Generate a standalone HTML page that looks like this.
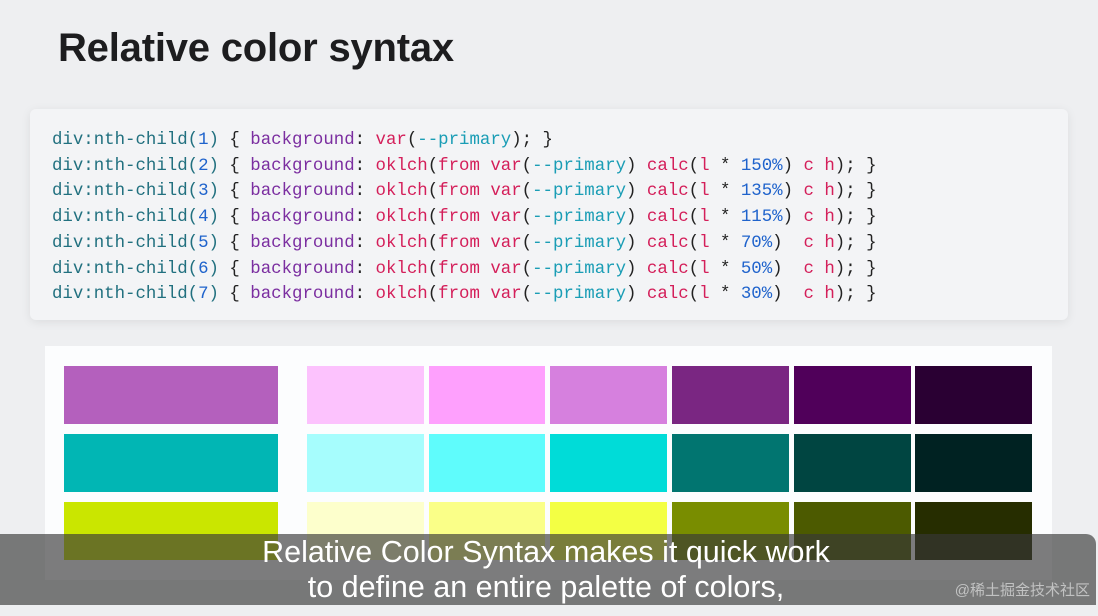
<!DOCTYPE html>
<html><head><meta charset="utf-8"><style>
*{margin:0;padding:0;box-sizing:border-box}
body{width:1098px;height:616px;overflow:hidden;background:#eeeff1;position:relative;font-family:"Liberation Sans",sans-serif}
h1{position:absolute;left:58px;top:24px;font-size:40px;font-weight:bold;color:#1d1d1f;letter-spacing:-0.2px;line-height:48px}
.code{position:absolute;left:30px;top:109px;width:1038px;height:211px;background:#f3f4f6;border-radius:6px;box-shadow:0 2px 10px rgba(0,0,0,0.08)}
pre{position:absolute;left:52px;top:128px;font-family:"Liberation Mono",monospace;font-size:17.4px;line-height:25.7px;color:#222}
.s{color:#21707f}.n{color:#1f63cc}.p{color:#7b2ea0}.f{color:#d41f5a}.v{color:#1a9db5}
.panel{position:absolute;left:45px;top:346px;width:1007px;height:234px;background:#fcfdfe}
.sw{position:absolute;height:58px}
.ov{position:absolute;left:0;top:534px;width:1096px;height:71px;background:rgba(55,55,55,0.65);border-top-right-radius:10px;color:#fff;text-align:center;font-size:30.5px;line-height:35px;padding-top:1px;padding-right:4px}
.wm{position:absolute;right:6px;bottom:4px;font-size:15px;color:rgba(255,255,255,0.55);font-family:"Liberation Sans","Noto Sans CJK SC",sans-serif;line-height:20px}
</style></head><body>
<h1>Relative color syntax</h1>
<div class="code"></div>
<pre><span class="s">div:nth-child(<span class="n">1</span>)</span> { <span class="p">background</span>: <span class="f">var</span>(<span class="v">--primary</span>); }
<span class="s">div:nth-child(<span class="n">2</span>)</span> { <span class="p">background</span>: <span class="f">oklch</span>(<span class="f">from</span> <span class="f">var</span>(<span class="v">--primary</span>) <span class="f">calc</span>(<span class="f">l</span> * <span class="n">150%</span>) <span class="f">c</span> <span class="f">h</span>); }
<span class="s">div:nth-child(<span class="n">3</span>)</span> { <span class="p">background</span>: <span class="f">oklch</span>(<span class="f">from</span> <span class="f">var</span>(<span class="v">--primary</span>) <span class="f">calc</span>(<span class="f">l</span> * <span class="n">135%</span>) <span class="f">c</span> <span class="f">h</span>); }
<span class="s">div:nth-child(<span class="n">4</span>)</span> { <span class="p">background</span>: <span class="f">oklch</span>(<span class="f">from</span> <span class="f">var</span>(<span class="v">--primary</span>) <span class="f">calc</span>(<span class="f">l</span> * <span class="n">115%</span>) <span class="f">c</span> <span class="f">h</span>); }
<span class="s">div:nth-child(<span class="n">5</span>)</span> { <span class="p">background</span>: <span class="f">oklch</span>(<span class="f">from</span> <span class="f">var</span>(<span class="v">--primary</span>) <span class="f">calc</span>(<span class="f">l</span> * <span class="n">70%</span>)  <span class="f">c</span> <span class="f">h</span>); }
<span class="s">div:nth-child(<span class="n">6</span>)</span> { <span class="p">background</span>: <span class="f">oklch</span>(<span class="f">from</span> <span class="f">var</span>(<span class="v">--primary</span>) <span class="f">calc</span>(<span class="f">l</span> * <span class="n">50%</span>)  <span class="f">c</span> <span class="f">h</span>); }
<span class="s">div:nth-child(<span class="n">7</span>)</span> { <span class="p">background</span>: <span class="f">oklch</span>(<span class="f">from</span> <span class="f">var</span>(<span class="v">--primary</span>) <span class="f">calc</span>(<span class="f">l</span> * <span class="n">30%</span>)  <span class="f">c</span> <span class="f">h</span>); }</pre>
<div class="panel"></div>
<div class="sw" style="left:64px;top:366px;width:214px;background:#b460bd"></div>
<div class="sw" style="left:307px;top:366px;width:117px;background:#fcc2fd"></div>
<div class="sw" style="left:429px;top:366px;width:116px;background:#fea0fd"></div>
<div class="sw" style="left:550px;top:366px;width:117px;background:#d680de"></div>
<div class="sw" style="left:672px;top:366px;width:117px;background:#7a2682"></div>
<div class="sw" style="left:794px;top:366px;width:117px;background:#50005a"></div>
<div class="sw" style="left:915px;top:366px;width:117px;background:#2a0033"></div>
<div class="sw" style="left:64px;top:434px;width:214px;background:#01b6b4"></div>
<div class="sw" style="left:307px;top:434px;width:117px;background:#a6fdfd"></div>
<div class="sw" style="left:429px;top:434px;width:116px;background:#5ffcfc"></div>
<div class="sw" style="left:550px;top:434px;width:117px;background:#00dcd8"></div>
<div class="sw" style="left:672px;top:434px;width:117px;background:#017570"></div>
<div class="sw" style="left:794px;top:434px;width:117px;background:#004541"></div>
<div class="sw" style="left:915px;top:434px;width:117px;background:#002222"></div>
<div class="sw" style="left:64px;top:502px;width:214px;background:#cae600"></div>
<div class="sw" style="left:307px;top:502px;width:117px;background:#fdffcc"></div>
<div class="sw" style="left:429px;top:502px;width:116px;background:#faff88"></div>
<div class="sw" style="left:550px;top:502px;width:117px;background:#f3ff44"></div>
<div class="sw" style="left:672px;top:502px;width:117px;background:#798d00"></div>
<div class="sw" style="left:794px;top:502px;width:117px;background:#4c5a00"></div>
<div class="sw" style="left:915px;top:502px;width:117px;background:#262d00"></div>
<div class="ov">Relative Color Syntax makes it quick work<br>to define an entire palette of colors,<div class="wm">@稀土掘金技术社区</div></div>
</body></html>
